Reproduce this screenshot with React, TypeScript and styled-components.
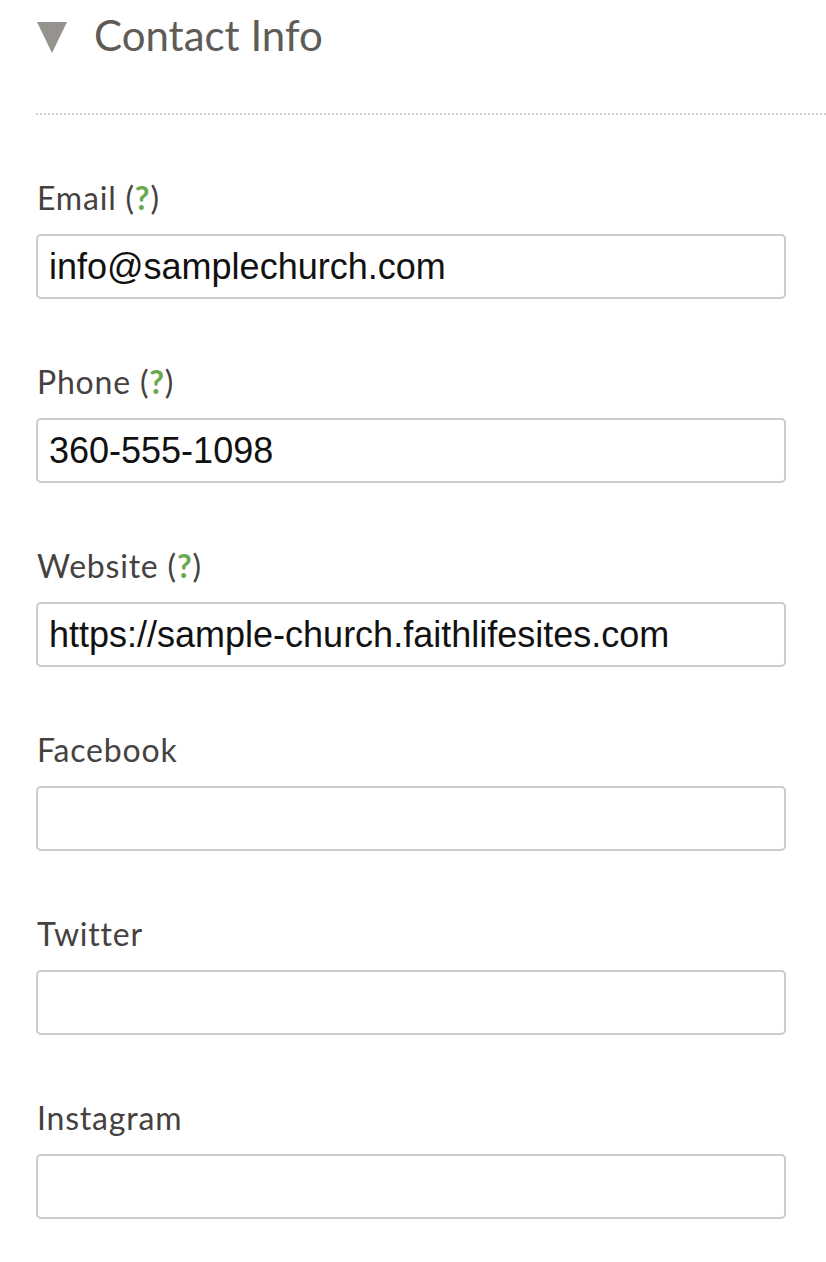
import React from "react";
import styled, { createGlobalStyle } from "styled-components";

const GlobalStyle = createGlobalStyle`
  html, body {
    margin: 0;
    padding: 0;
    background: #ffffff;
  }
`;

const Wrapper = styled.div`
  width: 826px;
  box-sizing: border-box;
  padding: 0 40px 0 36px;
  font-family: Lato, "Liberation Sans", sans-serif;
`;

const Header = styled.div`
  display: flex;
  align-items: center;
  height: 72px;
  margin-right: -40px;
  border-bottom: 2px dotted #cfcfcf;
  padding-bottom: 41px;
  padding-left: 1px;
`;

const Triangle = styled.span`
  width: 0;
  height: 0;
  border-left: 15px solid transparent;
  border-right: 15px solid transparent;
  border-top: 31px solid #96938f;
  margin-right: 27px;
  margin-top: 2px;
`;

const Title = styled.h2`
  margin: 0;
  font-size: 42px;
  font-weight: 400;
  color: #5f5c58;
  line-height: 50px;
  margin-top: -2px;
`;

const Fields = styled.div`
  display: flex;
  flex-direction: column;
  padding-top: 63px;
`;

const Field = styled.div`
  display: flex;
  flex-direction: column;
  height: 184px;
`;

const Label = styled.label`
  font-size: 32px;
  letter-spacing: 0.8px;
  color: #45423f;
  line-height: 40px;
  height: 40px;
  margin-bottom: 16px;
  padding-left: 1px;
`;

const Help = styled.span`
  color: #6aa84f;
  font-weight: 700;
`;

const Input = styled.input`
  display: block;
  width: 100%;
  height: 65px;
  box-sizing: border-box;
  border: 2px solid #cccccc;
  border-radius: 5px;
  padding: 0 11px;
  font-family: "Liberation Sans", Arial, sans-serif;
  font-size: 36px;
  color: #111111;
  background: #ffffff;
  outline: none;
`;

const fields = [
  { label: "Email", help: true, value: "info@samplechurch.com" },
  { label: "Phone", help: true, value: "360-555-1098" },
  { label: "Website", help: true, value: "https://sample-church.faithlifesites.com" },
  { label: "Facebook", help: false, value: "" },
  { label: "Twitter", help: false, value: "" },
  { label: "Instagram", help: false, value: "" },
];

export default function App() {
  return (
    <Wrapper>
      <GlobalStyle />
      <Header>
        <Triangle />
        <Title>Contact Info</Title>
      </Header>
      <Fields>
        {fields.map((f) => (
          <Field key={f.label}>
            <Label>
              {f.label}
              {f.help && (
                <>
                  {" "}(<Help>?</Help>)
                </>
              )}
            </Label>
            <Input type="text" defaultValue={f.value} />
          </Field>
        ))}
      </Fields>
    </Wrapper>
  );
}
